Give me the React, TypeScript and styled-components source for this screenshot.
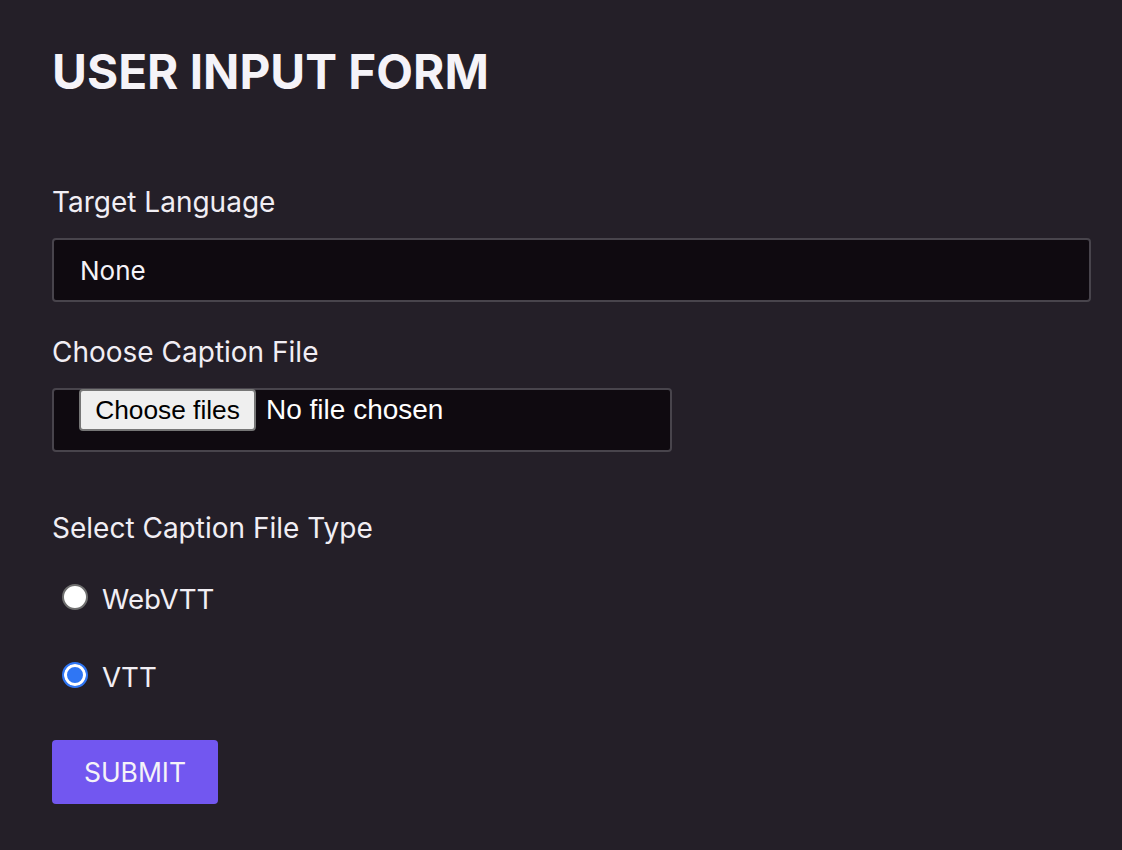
import styled, { createGlobalStyle } from 'styled-components';

const GlobalStyle = createGlobalStyle`
    html, body {
        margin: 0;
        padding: 0;
        background: #241f28;
    }
    body {
        font-family: Inter, "Noto Sans", sans-serif;
        color: #f3f1f6;
    }
    * {
        box-sizing: border-box;
    }
`

const Page = styled.main`
    min-height: 850px;
    padding: 48px 52px 40px;
    background: #241f28;
`

const Title = styled.h1`
    margin: 0;
    font-size: 47.7px;
    line-height: 48px;
    font-weight: 700;
    color: #f5f3f8;
`

const Form = styled.form`
    display: flex;
    flex-direction: column;
    align-items: flex-start;
    margin-top: 88px;
`

const Label = styled.label<{ $gap?: number }>`
    display: block;
    font-size: 28px;
    line-height: 36px;
    color: #f1eef4;
    margin-top: ${p => p.$gap ?? 0}px;
`

const Select = styled.select`
    appearance: none;
    width: 1039px;
    height: 64px;
    margin-top: 18px;
    padding: 0 26px;
    background: #0f0a10;
    color: #f5f3f8;
    border: 2px solid #48444c;
    border-radius: 4px;
    font-family: Inter, sans-serif;
    font-size: 26px;
    outline: none;
`

const FileBox = styled.div`
    display: flex;
    align-items: center;
    gap: 10px;
    width: 620px;
    height: 64px;
    margin-top: 18px;
    padding: 0 0 20px 25px;
    background: #0f0a10;
    border: 2px solid #48444c;
    border-radius: 4px;
`

const HiddenInput = styled.input`
    display: none;
`

const FileButton = styled.label`
    display: flex;
    align-items: center;
    justify-content: center;
    width: 177px;
    height: 42px;
    background: #efefef;
    border: 2px solid #767676;
    border-radius: 4px;
    color: #000;
    font-family: "Liberation Sans", Arial, sans-serif;
    font-size: 26.3px;
    cursor: pointer;
`

const FileName = styled.span`
    font-family: "Liberation Sans", Arial, sans-serif;
    font-size: 28px;
    color: #ffffff;
`

const RadioRow = styled.label<{ $gap: number }>`
    display: flex;
    align-items: center;
    gap: 14px;
    height: 36px;
    margin-top: ${p => p.$gap}px;
    padding-left: 10px;
    font-size: 27.7px;
    color: #f1eef4;
    cursor: pointer;
`

const RadioText = styled.span`
    padding-top: 4px;
`

const Radio = styled.input`
    appearance: none;
    margin: 0;
    width: 26px;
    height: 26px;
    border-radius: 50%;
    background: #ffffff;
    border: 2px solid #6f6f6f;

    &:checked {
        border: 2px solid #2f76f4;
        background: #2f76f4;
        box-shadow: inset 0 0 0 3px #ffffff;
    }
`

const Submit = styled.button`
    margin-top: 47px;
    width: 166px;
    height: 64px;
    border: none;
    border-radius: 4px;
    background: #7257f0;
    color: #f5f3f8;
    font-family: Inter, sans-serif;
    font-size: 26.5px;
    cursor: pointer;
`

export default function App() {
    return (
        <>
            <GlobalStyle/>
            <Page>
                <Title>USER INPUT FORM</Title>
                <Form onSubmit={e => e.preventDefault()}>
                    <Label htmlFor="language">Target Language</Label>
                    <Select id="language" defaultValue="none">
                        <option value="none">None</option>
                    </Select>

                    <Label $gap={32}>Choose Caption File</Label>
                    <FileBox>
                        <HiddenInput id="caption" type="file" multiple/>
                        <FileButton htmlFor="caption">Choose files</FileButton>
                        <FileName>No file chosen</FileName>
                    </FileBox>

                    <Label $gap={58}>Select Caption File Type</Label>
                    <RadioRow $gap={33}>
                        <Radio type="radio" name="type" value="webvtt"/>
                        <RadioText>WebVTT</RadioText>
                    </RadioRow>
                    <RadioRow $gap={42}>
                        <Radio type="radio" name="type" value="vtt" defaultChecked/>
                        <RadioText>VTT</RadioText>
                    </RadioRow>

                    <Submit type="submit">SUBMIT</Submit>
                </Form>
            </Page>
        </>
    );
}
